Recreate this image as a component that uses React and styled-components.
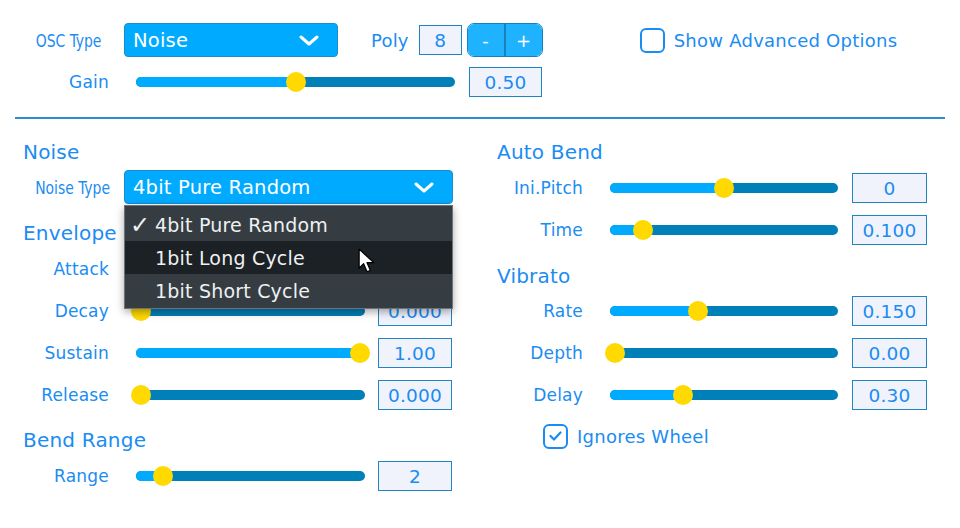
import styled, { createGlobalStyle } from "styled-components";

//==========================================================================
//  *** Colours ***

const BLUE_TEXT = "#1a8cf2";
const FILL = "#00abff";
const TRACK = "#0080b8";
const THUMB = "#ffd900";
const BOX_BORDER = "#1f84c0";
const BOX_BG = "#f1f3fc";

//==========================================================================
//  *** Styled components ***

const GlobalStyle = createGlobalStyle`
    body {
        margin: 0;
        background: #ffffff;
        font-family: "DejaVu Sans", Verdana, sans-serif;
        letter-spacing: 0.2px;
    }
`

const Page = styled.div`
    width: 960px;
    height: 528px;
    overflow: hidden;
    position: relative;
    background: #fff;
`

const TopArea = styled.div`
    display: flex;
    flex-direction: column;
    gap: 10px;
    padding: 23px 0 0 15px;
`

const TopRow = styled.div`
    display: flex;
    align-items: center;
`

const Label = styled.div`
    width: ${p => p.$w || 86}px;
    flex: none;
    text-align: right;
    color: ${BLUE_TEXT};
    font-size: 17px;
    margin-right: ${p => p.$gap ?? 27}px;
    white-space: nowrap;
`

// squeezed labels, as the plugin draws them
const Narrow = styled.span`
    display: inline-block;
    font-family: "DejaVu Sans Condensed", "DejaVu Sans", sans-serif;
    font-size: 18px;
    letter-spacing: 0;
    transform: scaleX(0.86);
    transform-origin: right center;
`

const Select = styled.div`
    position: relative;
    box-sizing: border-box;
    width: ${p => p.$w ? `${p.$w}px` : "auto"};
    flex: ${p => p.$w ? "none" : 1};
    height: 34px;
    background: ${FILL};
    border: 1px solid #1a8ccc;
    border-radius: 4px;
    color: #fff;
    font-size: 19.5px;
    display: flex;
    align-items: center;
    justify-content: space-between;
    padding: 0 18px 0 8px;
`

const Chevron = () => (
    <svg width="20" height="11" viewBox="0 0 20 11">
        <path d="M2 2 L10 9 L18 2" fill="none" stroke="#fff" strokeWidth="3" strokeLinecap="round" strokeLinejoin="round" />
    </svg>
)

const Menu = styled.div`
    position: absolute;
    top: 34px;
    left: -1px;
    right: -1px;
    z-index: 5;
    background: #353d43;
    border: 1px solid #6d7479;
    box-shadow: 0 3px 8px rgba(0,0,0,0.35);
    padding: 2px 0 1px;
`

const MenuItem = styled.div`
    height: 33px;
    display: flex;
    align-items: center;
    padding-left: 30px;
    position: relative;
    color: #eef0f1;
    font-size: 19px;
    background: ${p => p.$hover ? "#1b2124" : "transparent"};
`

const Tick = styled.span`
    position: absolute;
    left: 5px;
    font-size: 24px;
    font-weight: bold;
`

const Cursor = styled.svg`
    position: absolute;
    left: 233px;
    top: 42px;
    z-index: 6;
`

const PolyLabel = styled.span`
    color: ${BLUE_TEXT};
    font-size: 18px;
    margin: 0 10px 0 33px;
`

const ValueBox = styled.div`
    box-sizing: border-box;
    width: ${p => p.$w || 74}px;
    height: ${p => p.$h || 30}px;
    flex: none;
    background: ${BOX_BG};
    border: 1.5px solid ${BOX_BORDER};
    color: ${BLUE_TEXT};
    font-size: 18.5px;
    display: flex;
    align-items: center;
    justify-content: center;
    margin-left: ${p => p.$ml ?? 13}px;
`

const StepGroup = styled.div`
    display: flex;
    box-sizing: border-box;
    width: 76px;
    height: 34px;
    margin-left: 5px;
    border: 1px solid #1a80b8;
    border-radius: 7px;
    overflow: hidden;
`

const StepButton = styled.div`
    flex: 1;
    display: flex;
    align-items: center;
    justify-content: center;
    background: #1eb2ff;
    color: #fff;
    font-size: 18px;
    & + & {
        border-left: 2px solid #1a80b8;
    }
`

const CheckRow = styled.div`
    display: flex;
    align-items: center;
    gap: 9px;
    margin-left: ${p => p.$ml || 0}px;
    margin-top: ${p => p.$mt || 0}px;
    height: 26px;
    color: ${BLUE_TEXT};
    font-size: 18px;
    letter-spacing: 0.25px;
`

const CheckBox = styled.div`
    box-sizing: border-box;
    width: 25px;
    height: 25px;
    border: 2px solid ${BLUE_TEXT};
    border-radius: 6px;
    background: #fff;
    display: flex;
    align-items: center;
    justify-content: center;
`

const Divider = styled.hr`
    margin: 20px 15px 0 15px;
    border: none;
    height: 2px;
    background: #2a8fd0;
`

const Columns = styled.div`
    display: grid;
    grid-template-columns: 430px 430px;
    column-gap: 44px;
    padding: 20px 0 0 23px;
`

const Column = styled.div`
    display: flex;
    flex-direction: column;
`

const Section = styled.div`
    display: flex;
    flex-direction: column;
    margin-top: ${p => p.$space ?? 18}px;
    &:first-child { margin-top: 0; }
`

const Heading = styled.div`
    height: 26px;
    line-height: 26px;
    color: ${BLUE_TEXT};
    font-size: 20px;
    position: relative;
    z-index: 1;
`

const Rows = styled.div`
    display: flex;
    flex-direction: column;
    gap: 12px;
    margin-top: ${p => p.$mt ?? 8}px;
`

const Row = styled.div`
    display: flex;
    align-items: center;
    height: ${p => p.$h || 30}px;
`

const SliderWrap = styled.div`
    position: relative;
    width: ${p => p.$w}px;
    height: 22px;
    flex: none;
`

const Track = styled.div`
    position: absolute;
    left: 0;
    right: 0;
    top: 6px;
    height: 10px;
    border-radius: 5px;
    background: ${TRACK};
    overflow: hidden;
`

const Fill = styled.div`
    height: 100%;
    background: ${FILL};
`

const Thumb = styled.div`
    position: absolute;
    top: 1px;
    width: 20px;
    height: 20px;
    margin-left: -10px;
    border-radius: 50%;
    background: ${THUMB};
`

//==========================================================================

function Slider({ width, value }) {
    const pos = 5 + value * (width - 10);
    return (
        <SliderWrap $w={width}>
            <Track><Fill style={{ width: pos }} /></Track>
            <Thumb style={{ left: pos }} />
        </SliderWrap>
    )
}

function ParamRow({ label, value, text, right }) {
    return (
        <Row>
            <Label>{label}</Label>
            <Slider width={right ? 228 : 229} value={value} />
            <ValueBox $w={right ? 75 : 74} $ml={right ? 14 : 13}>{text}</ValueBox>
        </Row>
    )
}

const leftEnvelope = [
    { label: "Attack", value: 0, text: "0.000" },
    { label: "Decay", value: 0, text: "0.000" },
    { label: "Sustain", value: 1, text: "1.00" },
    { label: "Release", value: 0, text: "0.000" },
]

const vibrato = [
    { label: "Rate", value: 0.38, text: "0.150" },
    { label: "Depth", value: 0, text: "0.00" },
    { label: "Delay", value: 0.31, text: "0.30" },
]

function App() {
    return (
        <Page>
            <GlobalStyle />
            <TopArea>
                <TopRow>
                    <Label $w={86} $gap={23}><Narrow>OSC Type</Narrow></Label>
                    <Select $w={214}>Noise<Chevron /></Select>
                    <PolyLabel>Poly</PolyLabel>
                    <ValueBox $w={43} $ml={0}>8</ValueBox>
                    <StepGroup>
                        <StepButton>-</StepButton>
                        <StepButton>+</StepButton>
                    </StepGroup>
                    <CheckRow $ml={97}>
                        <CheckBox />
                        Show Advanced Options
                    </CheckRow>
                </TopRow>
                <TopRow>
                    <Label $w={94}>Gain</Label>
                    <Slider width={319} value={0.5} />
                    <ValueBox $w={73} $ml={14}>0.50</ValueBox>
                </TopRow>
            </TopArea>

            <Divider />

            <Columns>
                <Column>
                    <Section>
                        <Heading>Noise</Heading>
                        <Rows $mt={5}>
                            <Row $h={34}>
                                <Label $gap={15}><Narrow>Noise Type</Narrow></Label>
                                <Select>
                                    4bit Pure Random<Chevron />
                                    <Menu>
                                        <MenuItem><Tick>✓</Tick>4bit Pure Random</MenuItem>
                                        <MenuItem $hover>1bit Long Cycle</MenuItem>
                                        <MenuItem>1bit Short Cycle</MenuItem>
                                        <Cursor width="18" height="27" viewBox="0 0 16 24">
                                            <path d="M1 1 L1 18 L5 14 L8 21 L11 20 L8 13 L14 13 Z" fill="#fff" stroke="#000" strokeWidth="1.1" strokeLinejoin="round" />
                                        </Cursor>
                                    </Menu>
                                </Select>
                            </Row>
                        </Rows>
                    </Section>
                    <Section $space={16}>
                        <Heading>Envelope</Heading>
                        <Rows>
                            {leftEnvelope.map(r => <ParamRow key={r.label} {...r} />)}
                        </Rows>
                    </Section>
                    <Section $space={17}>
                        <Heading>Bend Range</Heading>
                        <Rows>
                            <ParamRow label="Range" value={0.1} text="2" />
                        </Rows>
                    </Section>
                </Column>

                <Column>
                    <Section>
                        <Heading>Auto Bend</Heading>
                        <Rows>
                            <ParamRow right label="Ini.Pitch" value={0.5} text="0" />
                            <ParamRow right label="Time" value={0.13} text="0.100" />
                        </Rows>
                    </Section>
                    <Section>
                        <Heading>Vibrato</Heading>
                        <Rows $mt={7}>
                            {vibrato.map(r => <ParamRow right key={r.label} {...r} />)}
                            <CheckRow $ml={46} $mt={1}>
                                <CheckBox>
                                    <svg width="13" height="10" viewBox="0 0 13 10">
                                        <path d="M1.5 5 L5 8.5 L11.5 1.5" fill="none" stroke={BLUE_TEXT} strokeWidth="2.2" strokeLinecap="round" strokeLinejoin="round" />
                                    </svg>
                                </CheckBox>
                                Ignores Wheel
                            </CheckRow>
                        </Rows>
                    </Section>
                </Column>
            </Columns>
        </Page>
    )
}

export default App;
